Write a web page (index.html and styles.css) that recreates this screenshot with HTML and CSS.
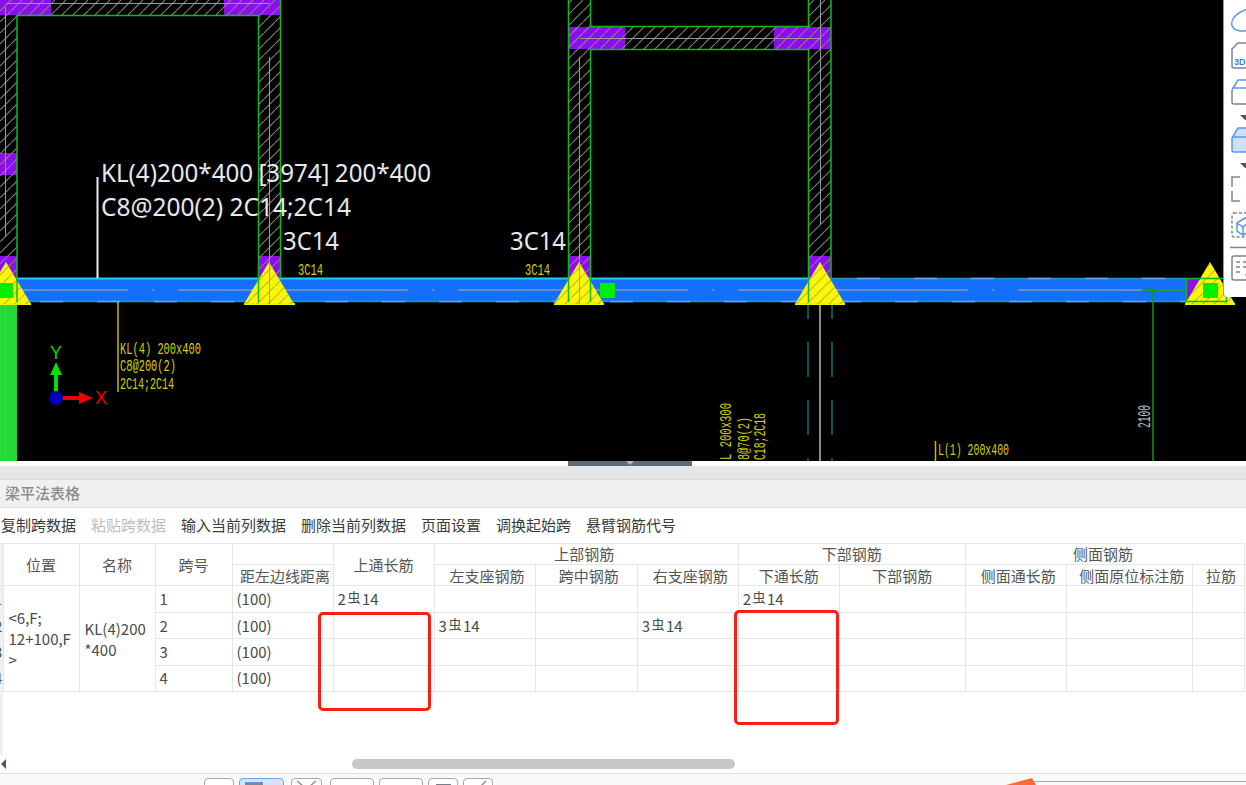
FILE: index.html
```html
<!DOCTYPE html>
<html lang="zh-CN">
<head>
<meta charset="utf-8">
<title>梁平法表格</title>
<link rel="stylesheet" href="styles.css">
</head>
<body>
<div class="app">
  <section class="cad">
    <svg class="cad-drawing" width="1246" height="461" viewBox="0 0 1246 461">
      <defs>
        <pattern id="hatch" patternUnits="userSpaceOnUse" width="11" height="11">
          <path d="M-1 12 L12 -1" class="hatch-line"/>
        </pattern>
        <clipPath id="tri-clip">
          <path d="M6 262 L31 304 H-19 Z M269 262 L294 304 H244 Z M579 262 L604 304 H554 Z M820 262 L845 304 H795 Z M1210 262 L1235 304 H1185 Z"/>
        </clipPath>
      </defs>

      <!-- purple column zones -->
      <g class="purple">
        <rect x="0" y="0" width="51" height="15"/>
        <rect x="224" y="0" width="56" height="15"/>
        <rect x="0" y="153" width="17" height="22"/>
        <rect x="0" y="256" width="17" height="22"/>
        <rect x="259" y="256" width="21" height="22"/>
        <rect x="569" y="27" width="56" height="22"/>
        <rect x="774" y="27" width="57" height="22"/>
        <rect x="569" y="256" width="21" height="22"/>
        <rect x="809" y="256" width="22" height="22"/>
      </g>

      <!-- wall hatching -->
      <g fill="url(#hatch)">
        <rect x="0" y="15" width="17" height="263"/>
        <rect x="0" y="0" width="280" height="15"/>
        <rect x="258" y="15" width="22" height="263"/>
        <rect x="568" y="0" width="22" height="278"/>
        <rect x="590" y="27" width="218" height="22"/>
        <rect x="568" y="27" width="22" height="22"/>
        <rect x="808" y="0" width="23" height="278"/>
      </g>

      <!-- beam -->
      <rect class="beam" x="0" y="278" width="1186" height="24"/>
      <rect class="purple-end" x="1187" y="279" width="12" height="22"/>
      <path class="beam-top" d="M17 278.5 H820"/>
      <path class="beam-edge" d="M820 278.5 H1186 M0 301.5 H1186"/>
      <path class="beam-dash" d="M-17 301.5 H1186"/>
      <path class="beam-dash" d="M857 278.5 H1186"/>
      <path class="beam-center" d="M-102 290 H1186"/>

      <!-- lower field -->
      <rect class="green-fill" x="0" y="304" width="17" height="157"/>
      <path class="grey-line" d="M5.5 304 V461"/>
      <path class="teal-dash" d="M808 300 V461 M832 300 V461"/>
      <path class="grey-thick" d="M820 304 V461"/>
      <path class="green-dark" d="M1153 290 V461 M1142 290 H1186 M1149 287 L1156 294"/>
      <path class="yellow-line" d="M118 302 V392 M935.5 441 V461"/>

      <!-- triangles -->
      <g class="tri">
        <path d="M6 262 L31 304 H-19 Z"/>
        <path d="M269 262 L294 304 H244 Z"/>
        <path d="M579 262 L604 304 H554 Z"/>
        <path d="M820 262 L845 304 H795 Z"/>
        <path d="M1210 262 L1235 304 H1185 Z"/>
      </g>
      <path class="tri-base" d="M-19 304 H31 M244 304 H295 M554 304 H604 M795 304 H845 M1185 304 H1235"/>
      <g class="tri-hatch" clip-path="url(#tri-clip)"><rect x="0" y="255" width="1246" height="50" fill="url(#hatch)"/></g>

      <!-- wall centre lines -->
      <path class="grey-line" d="M6 3.5 H270 M5.5 7 V236 M269.5 57 V304 M579.5 57 V304 M820.5 0 V225 M580 38.5 H820"/>

      <!-- wall outlines -->
      <path class="green-line" d="M17 302 V15.5 H258.5 V302 M280.5 0 V278 M568.5 0 V302 M590.5 0 V26.5 H808.5 V0 M590.5 302 V49.5 H808.5 V302 M831 0 V278"/>
      <rect class="green-line" x="1186.5" y="278.5" width="40" height="23"/>

      <!-- control squares -->
      <g class="handle">
        <rect x="0" y="283" width="13" height="15"/>
        <rect x="600" y="283" width="15" height="15"/>
        <rect x="1203" y="283" width="15" height="15"/>
      </g>

      <!-- annotations -->
      <path class="white-line" d="M97.5 177 V278"/>
      <text class="anno-white wide" x="101" y="182" textLength="330" lengthAdjust="spacingAndGlyphs">KL(4)200*400 [3974] 200*400</text>
      <text class="anno-white" x="101" y="216" textLength="250" lengthAdjust="spacingAndGlyphs">C8@200(2) 2C14;2C14</text>
      <text class="anno-white" x="283" y="250" textLength="56" lengthAdjust="spacingAndGlyphs">3C14</text>
      <text class="anno-white" x="510" y="250" textLength="56" lengthAdjust="spacingAndGlyphs">3C14</text>

      <text class="anno-yellow" x="298" y="275" textLength="25" lengthAdjust="spacingAndGlyphs">3C14</text>
      <text class="anno-yellow" x="525" y="275" textLength="25" lengthAdjust="spacingAndGlyphs">3C14</text>
      <text class="anno-yellow" x="120" y="354" textLength="81" lengthAdjust="spacingAndGlyphs">KL(4) 200x400</text>
      <text class="anno-yellow" x="120" y="371" textLength="56" lengthAdjust="spacingAndGlyphs">C8@200(2)</text>
      <text class="anno-yellow" x="120" y="389" textLength="54" lengthAdjust="spacingAndGlyphs">2C14;2C14</text>
      <text class="anno-yellow" x="938" y="455" textLength="71" lengthAdjust="spacingAndGlyphs">L(1) 200x400</text>
      <text class="anno-yellow" transform="translate(731 460) rotate(-90)" textLength="57" lengthAdjust="spacingAndGlyphs">L 200x300</text>
      <text class="anno-yellow" transform="translate(749 460) rotate(-90)" textLength="43" lengthAdjust="spacingAndGlyphs">8@70(2)</text>
      <text class="anno-yellow" transform="translate(765 460) rotate(-90)" textLength="47" lengthAdjust="spacingAndGlyphs">C18;2C18</text>
      <text class="anno-grey" transform="translate(1150 428) rotate(-90)" textLength="23" lengthAdjust="spacingAndGlyphs">2100</text>

      <!-- UCS axes -->
      <path class="axis-y" d="M56 392 V372"/>
      <path class="axis-y-head" d="M50 375 L56 362 L62 375 Z"/>
      <text class="axis-label-y" x="50" y="359">Y</text>
      <path class="axis-x" d="M60 398 H80"/>
      <path class="axis-x-head" d="M79 392 L93 398 L79 404 Z"/>
      <text class="axis-label-x" x="95" y="404">X</text>
      <circle class="axis-origin" cx="56" cy="398" r="7"/>
    </svg>

    <aside class="view-bar">
      <svg width="22" height="297" viewBox="1224 0 22 297">
        <ellipse class="ic-blue" cx="1247" cy="20" rx="16" ry="10" transform="rotate(-22 1247 20)"/>
        <path class="ic-grey" d="M1250 43 H1238 L1232 49 V66 Q1232 68 1234 68 H1250"/>
        <text class="ic-3d" x="1234" y="65">3D</text>
        <path class="ic-grey" d="M1232 90 V102 Q1232 104 1234 104 H1250"/>
        <path class="ic-blue" d="M1232 90 L1238 80 H1250 M1232 88 H1250"/>
        <path class="ic-arrow" d="M1240 115 H1250 V120 H1245 Z"/>
        <path class="ic-blue ic-fill" d="M1232 138 V150 Q1232 152 1234 152 H1250 V128 H1238 Z"/>
        <path class="ic-blue" d="M1232 137 H1250"/>
        <path class="ic-arrow" d="M1240 163 H1250 V168 H1245 Z"/>
        <path class="ic-grey" d="M1240 177 H1232 V187 M1232 191 V201 H1240"/>
        <rect class="ic-dash" x="1232" y="213" width="24" height="24" rx="2"/>
        <path class="ic-blue" d="M1237 223 L1245 218 L1250 221 V231 L1243 235 L1237 231 Z M1237 223 L1243 227 L1250 221 M1243 227 V235"/>
        <path class="ic-grey" d="M1230 247.5 H1246"/>
        <path class="ic-grey" d="M1250 256 H1234 Q1232 256 1232 258 V278 Q1232 280 1234 280 H1250"/>
        <path class="ic-grey" d="M1236 262 H1240 M1243 262 H1250 M1236 267 H1240 M1243 267 H1250 M1236 272 H1240"/>
        <path class="ic-blue" d="M1245 275 H1250"/>
      </svg>
    </aside>
  </section>

  <div class="splitter"><span class="splitter-handle"><i class="splitter-arrow"></i></span></div>
  <div class="panel-gap"></div>

  <section class="panel">
    <header class="panel-title">梁平法表格</header>
    <nav class="panel-tools">
      <span>复制跨数据</span>
      <span class="is-disabled">粘贴跨数据</span>
      <span>输入当前列数据</span>
      <span>删除当前列数据</span>
      <span>页面设置</span>
      <span>调换起始跨</span>
      <span>悬臂钢筋代号</span>
    </nav>

    <div class="grid-area">
      <table class="grid">
        <colgroup>
          <col class="c3"><col class="c76"><col class="c76"><col class="c77">
          <col class="c101"><col class="c101"><col class="c101"><col class="c102">
          <col class="c101"><col class="c101"><col class="c126"><col class="c101">
          <col class="c126"><col class="c52">
        </colgroup>
        <thead>
          <tr class="h-row">
            <th class="gutter" rowspan="2"></th>
            <th rowspan="2">位置</th>
            <th rowspan="2">名称</th>
            <th rowspan="2">跨号</th>
            <th></th>
            <th rowspan="2">上通长筋</th>
            <th class="shift-left" colspan="3">上部钢筋</th>
            <th colspan="2">下部钢筋</th>
            <th class="shift-left" colspan="3">侧面钢筋</th>
          </tr>
          <tr class="h-row sub-row">
            <th class="shift-right">距左边线距离</th>
            <th class="shift-right">左支座钢筋</th>
            <th class="shift-right">跨中钢筋</th>
            <th class="shift-right">右支座钢筋</th>
            <th>下通长筋</th>
            <th>下部钢筋</th>
            <th class="shift-right">侧面通长筋</th>
            <th class="shift-right">侧面原位标注筋</th>
            <th class="shift-right">拉筋</th>
          </tr>
        </thead>
        <tbody>
          <tr class="first-row">
            <td class="gutter"><span class="gutter-num is-current">1</span></td>
            <td class="merged" rowspan="4">&lt;6,F;<br>12+100,F<br>&gt;</td>
            <td class="merged" rowspan="4">KL(4)200<br>*400</td>
            <td>1</td><td>(100)</td>
            <td>2<span class="bar">虫</span>14</td>
            <td></td><td></td><td></td>
            <td>2<span class="bar">虫</span>14</td>
            <td></td><td></td><td></td><td></td>
          </tr>
          <tr>
            <td class="gutter"><span class="gutter-num">2</span></td>
            <td>2</td><td>(100)</td>
            <td></td>
            <td>3<span class="bar">虫</span>14</td>
            <td></td>
            <td>3<span class="bar">虫</span>14</td>
            <td></td><td></td><td></td><td></td><td></td>
          </tr>
          <tr>
            <td class="gutter"><span class="gutter-num">3</span></td>
            <td>3</td><td>(100)</td>
            <td></td><td></td><td></td><td></td><td></td><td></td><td></td><td></td><td></td>
          </tr>
          <tr>
            <td class="gutter"><span class="gutter-num">4</span></td>
            <td>4</td><td>(100)</td>
            <td></td><td></td><td></td><td></td><td></td><td></td><td></td><td></td><td></td>
          </tr>
        </tbody>
      </table>
      <div class="mark mark-top"></div>
      <div class="mark mark-bottom"></div>
    </div>

    <div class="scrollbar">
      <i class="scroll-left"></i>
      <span class="scroll-thumb"></span>
    </div>

    <footer class="status">
      <span class="st-btn w30"></span>
      <span class="st-btn w45 is-on"><i class="st-tab"></i></span>
      <span class="st-btn w31">
        <svg width="29" height="8" viewBox="0 0 29 8"><path class="st-ic" d="M5 2 L11 7 M24 2 L18 7"/></svg>
      </span>
      <span class="st-btn w44"></span>
      <span class="st-btn w44"></span>
      <span class="st-btn w30"><i class="st-bar"></i></span>
      <span class="st-btn w30">
        <svg width="28" height="8" viewBox="0 0 28 8"><path class="st-ic" d="M17 7 L22 2"/></svg>
      </span>
      <svg class="pointer" width="240" height="8" viewBox="0 0 240 8">
        <path class="pointer-line" d="M28 4.5 H240"/>
        <path class="pointer-head" d="M0 8 L26 1 L30 8 Z"/>
      </svg>
    </footer>
  </section>
</div>
</body>
</html>
```

FILE: styles.css
```css
* { box-sizing: border-box; }
html, body { margin: 0; padding: 0; height: 785px; overflow: hidden; background: #fff; }
body { font-family: "Noto Sans CJK SC", "Noto Sans", sans-serif; font-size: 15px; color: #4a4a4a; }

.app { position: relative; width: 1246px; height: 785px; overflow: hidden; display: flex; flex-direction: column; }

/* CAD viewport */
.cad { position: relative; height: 461px; flex: none; background: #000; overflow: hidden; }
.cad-drawing { display: block; }
.purple rect, .purple-end { fill: #8f0cf2; }
.hatch-line { stroke: #7f7f7f; stroke-width: 1.2; fill: none; }
.tri-hatch { opacity: .55; }
.beam { fill: #1470fb; }
.beam-top { stroke: #19cfee; stroke-width: 2; fill: none; }
.beam-edge { stroke: #1a9db4; stroke-width: 1.5; fill: none; }
.beam-dash { stroke: #6d9ff7; stroke-width: 1.5; fill: none; stroke-dasharray: 23 34; }
.beam-center { stroke: #8597bd; stroke-width: 1.5; fill: none; stroke-dasharray: 230 24 2 24; }
.green-fill { fill: #23d935; }
.grey-line { stroke: #999; stroke-width: 1; fill: none; }
.grey-thick { stroke: #8a8a8a; stroke-width: 2; fill: none; }
.teal-dash { stroke: #0a6f78; stroke-width: 1.5; fill: none; stroke-dasharray: 35 23; stroke-dashoffset: 16; }
.green-line { stroke: #0cbc14; stroke-width: 1.5; fill: none; }
.green-dark { stroke: #0a9a10; stroke-width: 1.5; fill: none; }
.yellow-line { stroke: #c9bb00; stroke-width: 1.5; fill: none; }
.white-line { stroke: #ececec; stroke-width: 2; fill: none; }
.tri path { fill: #fdf800; }
.tri-base { stroke: #f4ee00; stroke-width: 2; fill: none; }
.handle rect { fill: #00f000; }
.anno-white { font-family: "Noto Sans", sans-serif; font-size: 25px; fill: #e8e8e8; }
.anno-white.wide { word-spacing: -1px; }
.anno-yellow { font-family: "Liberation Mono", monospace; font-size: 16px; fill: #d6d000; }
.anno-grey { font-family: "Liberation Mono", monospace; font-size: 19px; fill: #bdbdbd; }
.axis-y { stroke: #00e000; stroke-width: 4; fill: none; }
.axis-y-head { fill: #00e000; }
.axis-x { stroke: #f00000; stroke-width: 4; fill: none; }
.axis-x-head { fill: #f00000; }
.axis-origin { fill: #0000b8; }
.axis-label-y { font-family: "Liberation Sans", sans-serif; font-size: 18px; fill: #00d800; }
.axis-label-x { font-family: "Liberation Sans", sans-serif; font-size: 18px; fill: #f00000; }

/* view toolbar overlaying the drawing */
.view-bar { position: absolute; top: 0; right: 0; width: 22px; height: 297px; background: #fff; border-bottom-left-radius: 4px; box-shadow: -1px 0 0 #9a9a9a; }
.view-bar svg { display: block; }
.ic-blue { fill: none; stroke: #5a9ae6; stroke-width: 1.5; }
.ic-fill { fill: #cfe0f8; }
.ic-grey { fill: none; stroke: #7d8590; stroke-width: 1.5; }
.ic-dash { fill: none; stroke: #7d8590; stroke-width: 1.5; stroke-dasharray: 3 2; }
.ic-arrow { fill: #55595f; }
.ic-3d { font-family: "Liberation Sans", sans-serif; font-size: 9px; font-weight: 700; fill: #3a86e0; }

/* splitter */
.splitter { position: relative; height: 5px; flex: none; background: #fff; }
.splitter-handle { position: absolute; left: 568px; top: 0; width: 124px; height: 5px; background: #5f6c78; }
.splitter-arrow { position: absolute; left: 58px; top: 0; border-left: 4px solid transparent; border-right: 4px solid transparent; border-top: 4px solid #b4bac0; }
.panel-gap { height: 14px; flex: none; background: #e6e6e6; border-bottom: 1px solid #dedede; }

/* panel */
.panel { flex: 1; display: flex; flex-direction: column; min-height: 0; background: #fff; }
.panel-title { height: 28px; flex: none; padding: 0 0 0 5px; line-height: 26px; font-weight: 500; font-size: 15px; color: #8c8c8c; background: #f0f0f0; border-bottom: 1px solid #dcdcdc; }
.panel-tools { height: 35px; flex: none; display: flex; gap: 15px; padding: 6px 0 0 1px; line-height: 21px; color: #3c3c3c; background: #fff; }
.panel-tools .is-disabled { color: #bdbdbd; }

.grid-area { position: relative; height: 212px; flex: none; background: linear-gradient(#f0f0f0, #f0f0f0) 0 0 / 3px 100% no-repeat; }
.grid { border-collapse: collapse; table-layout: fixed; width: 1245px; }
.c3 { width: 3px; } .c52 { width: 52px; } .c76 { width: 76px; } .c77 { width: 77px; }
.c101 { width: 101px; } .c102 { width: 102px; } .c126 { width: 126px; }
.grid th, .grid td { border: 1.5px solid #e6e6e6; padding: 0 4px; overflow: hidden; white-space: nowrap; line-height: 20px; }
.grid th { font-weight: 400; text-align: center; color: #555; padding: 0; }
.grid th.shift-right { padding-left: 5px; }
.grid th.shift-left { padding-right: 4px; }
.grid .sub-row th { padding-top: 1px; line-height: 19px; }
.grid td { color: #4a4a4a; text-align: left; }
.h-row { height: 21px; }
.grid tbody tr { height: 26.4px; }
.grid tbody tr.first-row { height: 27px; }
.grid .gutter { padding: 0; background: #f0f0f0; border-left: 0; }
.gutter-num { display: block; margin-left: -6px; color: #555; }
.gutter-num.is-current { color: #2f7fd8; }
.grid .merged { padding-left: 5px; white-space: normal; vertical-align: middle; line-height: 21px; }
.bar { display: inline-block; font-size: 13px; line-height: 12px; margin: 0 1.5px; vertical-align: 3px; }

/* red review marks */
.mark { position: absolute; border: 3.5px solid #f8200f; border-radius: 5px; }
.mark-top { left: 318px; top: 69px; width: 113px; height: 99px; }
.mark-bottom { left: 734px; top: 67px; width: 105px; height: 115px; }

/* scrollbar */
.scrollbar { position: relative; height: 19px; flex: none; background: #fff; border-bottom: 1px solid #ddd; }
.scroll-left { position: absolute; left: 1px; top: 4px; border-top: 5px solid transparent; border-bottom: 5px solid transparent; border-right: 5px solid #4d5866; }
.scroll-thumb { position: absolute; left: 352px; top: 4px; width: 383px; height: 10px; border-radius: 5px; background: #c8c8c8; }

/* bottom strip */
.status { position: relative; flex: 1; min-height: 0; display: flex; gap: 5px; padding: 4px 0 0 204px; overflow: hidden; background: #fafafa; }
.st-btn { position: relative; display: block; flex: none; height: 20px; border: 1px solid #a8a8a8; border-radius: 4px; background: #fff; }
.st-btn svg { display: block; }
.w30 { width: 30px; } .w31 { width: 31px; margin: 0 3px 0 2px; } .w44 { width: 44px; } .w45 { width: 45px; }
.is-on { border-color: #64a4ee; background: #d4e5fb; }
.st-tab { position: absolute; left: 5px; top: 3px; width: 18px; height: 3px; background: #7d8a9a; border-top: 1px solid #5a9ae6; }
.st-bar { position: absolute; left: 7px; top: 5px; width: 15px; height: 3px; background: #777f8a; }
.st-ic { fill: none; stroke: #8b929b; stroke-width: 1.5; }
.pointer { position: absolute; right: 0; bottom: 0; }
.pointer-line { stroke: #a8a8b4; stroke-width: 1; fill: none; }
.pointer-head { fill: #ff6a33; }
```
